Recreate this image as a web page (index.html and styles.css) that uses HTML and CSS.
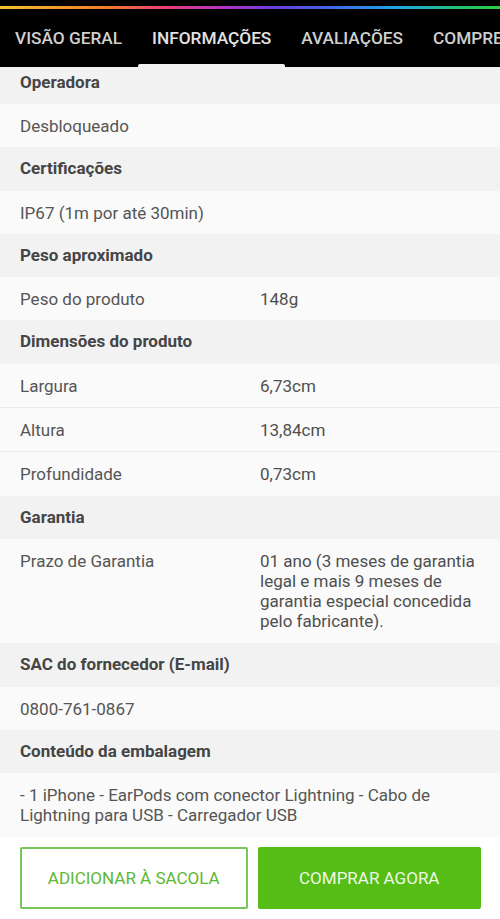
FILE: index.html
```html
<!DOCTYPE html>
<html lang="pt-BR">
<head>
    <meta charset='utf-8'>
    <meta name="viewport" content="width=device-width, initial-scale=1">
    <title>Informações do produto</title>
    <link rel="stylesheet" href="styles.css">
</head>
<body>

<div class="top">
    <div class="rainbow"></div>
    <nav class="tabs">
        <a href="#" class="tab">VISÃO GERAL</a>
        <a href="#" class="tab active">INFORMAÇÕES</a>
        <a href="#" class="tab">AVALIAÇÕES</a>
        <a href="#" class="tab">COMPRE JUNTO</a>
    </nav>
</div>

<div class="specs">
    <div class="head first">Operadora</div>
    <div class="row"><span class="full">Desbloqueado</span></div>

    <div class="head">Certificações</div>
    <div class="row"><span class="full">IP67 (1m por até 30min)</span></div>

    <div class="head">Peso aproximado</div>
    <div class="row"><span class="key">Peso do produto</span><span class="val">148g</span></div>

    <div class="head">Dimensões do produto</div>
    <div class="row line"><span class="key">Largura</span><span class="val">6,73cm</span></div>
    <div class="row line"><span class="key">Altura</span><span class="val">13,84cm</span></div>
    <div class="row last"><span class="key">Profundidade</span><span class="val">0,73cm</span></div>

    <div class="head">Garantia</div>
    <div class="row tall"><span class="key">Prazo de Garantia</span><span class="val">01 ano (3 meses de garantia legal e mais 9 meses de garantia especial concedida pelo fabricante).</span></div>

    <div class="head">SAC do fornecedor (E-mail)</div>
    <div class="row"><span class="full">0800-761-0867</span></div>

    <div class="head">Conteúdo da embalagem</div>
    <div class="row tall"><span class="full">- 1 iPhone - EarPods com conector Lightning - Cabo de Lightning para USB - Carregador USB</span></div>
</div>

<div class="actions">
    <button class="btn outline">ADICIONAR À SACOLA</button>
    <button class="btn solid">COMPRAR AGORA</button>
</div>

</body>
</html>
```

FILE: styles.css
```css
body {
    margin: 0;
    font-family: Roboto, "Liberation Sans", sans-serif;
    background: #FFFFFF;
    overflow: hidden;
}

.top {
    background: #000000;
    padding-top: 6px;
}

.rainbow {
    height: 3px;
    background: linear-gradient(to right, #f3c030, #f07a2a 22%, #ea3c78 33%, #b233c8 45%, #6a3ee0 55%, #3a6fe8 68%, #1fa8e0 80%, #22c070 92%, #2ad23a);
}

.tabs {
    display: flex;
    white-space: nowrap;
    height: 58px;
    overflow: hidden;
}

.tab {
    display: block;
    flex-shrink: 0;
    padding: 0 15px;
    line-height: 58px;
    font-size: 17.25px;
    font-weight: 500;
    color: #cfcfcf;
    text-decoration: none;
    position: relative;
}

.tab.active {
    color: #e2e2e2;
}

.tab.active::after {
    content: "";
    position: absolute;
    left: 1px;
    right: 1px;
    bottom: 0;
    height: 3px;
    background: #f2f2f2;
    border-radius: 2px 2px 0 0;
}

.specs {
    font-size: 17px;
    color: #555555;
}

.head {
    background: #f2f2f2;
    font-weight: 700;
    color: #454545;
    padding: 0 20px;
    line-height: 43.5px;
    height: 43.5px;
}

.head.first {
    height: 37px;
    line-height: 31px;
}

.row {
    background: #fafafa;
    display: flex;
    padding: 12px 14px 11px 20px;
    line-height: 20px;
}

.row.line {
    border-bottom: 1px solid #ebebeb;
}

.row.last {
    padding-bottom: 12px;
}

.row.tall {
    padding-bottom: 12px;
}

.row .key {
    width: 240px;
    flex-shrink: 0;
}

.row .val {
    flex: 1;
    color: #4f4f4f;
}

.row .full {
    flex: 1;
    padding-right: 6px;
}

.actions {
    display: flex;
    gap: 10px;
    padding: 10px 19px 0 20px;
}

.btn {
    flex: 1;
    height: 62px;
    font-family: Roboto, "Liberation Sans", sans-serif;
    font-size: 17px;
    border-radius: 2px;
    cursor: pointer;
}

.btn.outline {
    background: #FFFFFF;
    border: 2px solid #76c65a;
    color: #5cb832;
}

.btn.solid {
    background: #55bd16;
    border: 0;
    color: #eef8e6;
}
```
